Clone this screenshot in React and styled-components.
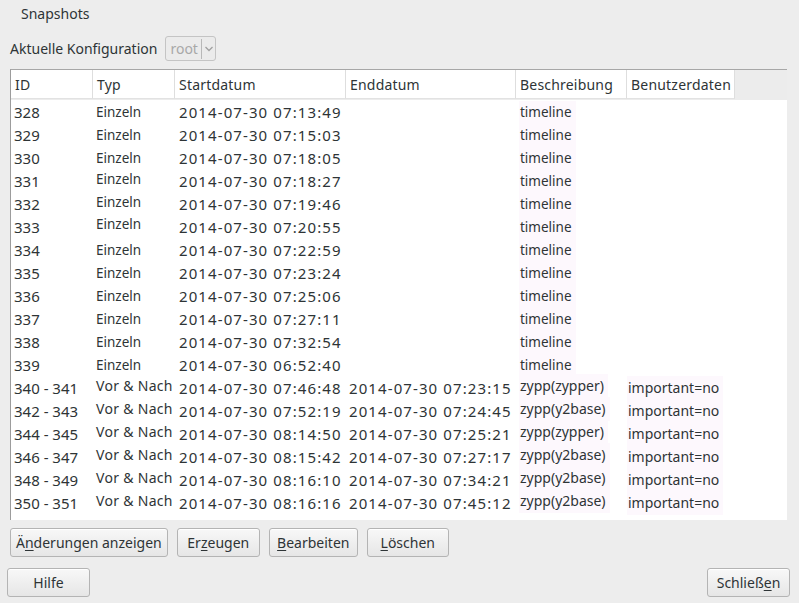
import React from 'react'
import styled, { createGlobalStyle } from 'styled-components'

const Global = createGlobalStyle`
  html, body {
    margin: 0;
    padding: 0;
    background: #ededed;
  }
  body {
    font-family: 'Noto Sans', 'Open Sans', sans-serif;
    color: #2e3436;
  }
`

const Window = styled.div`
  width: 799px;
  height: 603px;
  overflow: hidden;
  background: #ededed;
  display: flex;
  flex-direction: column;
`
const Title = styled.div`
  font-size: 14px;
  padding: 4px 0 0 21px;
  height: 26px;
  box-sizing: border-box;
`
const ConfigRow = styled.div`
  display: flex;
  align-items: center;
  gap: 8px;
  padding: 10px 0 0 10px;
  font-size: 14px;
`
const Combo = styled.div`
  display: flex;
  align-items: center;
  height: 25px;
  box-sizing: border-box;
  border: 1px solid #c4c4c4;
  border-radius: 3px;
  background: #ebebeb;
  color: #a8a8a8;
  font-size: 14px;
  padding: 0 1px 0 4px;
`
const ComboSep = styled.span`
  width: 1px;
  height: 20px;
  background: #b8b8b8;
  margin: 0 2px 0 3px;
`
const Panel = styled.div`
  margin: 8px 12px 0 10px;
  height: 451px;
  box-sizing: border-box;
  border-left: 1px solid #9c9c9c;
  border-top: 1px solid #a7a7a7;
  background: #fff;
  display: flex;
  flex-direction: column;
`
const HeaderRow = styled.div`
  display: flex;
  height: 29px;
  background: #ececec;
  border-bottom: 1px solid #ececec;
`
const HeadCell = styled.div`
  width: ${p => p.w}px;
  flex: none;
  box-sizing: border-box;
  background: #fff;
  border-right: 1px solid #dedede;
  border-bottom: 1px solid #e2e2e2;
  padding: 5px 0 0 4px;
  font-size: 14px;
  letter-spacing: 0.2px;
`
const Row = styled.div`
  display: flex;
  height: 23px;
  align-items: center;
`
const Cell = styled.div`
  width: ${p => p.w}px;
  flex: none;
  box-sizing: border-box;
  padding-left: ${p => p.pl ?? 3}px;
  font-size: ${p => p.fs || 15}px;
  letter-spacing: ${p => p.ls || 0}px;
  white-space: nowrap;
  position: relative;
  top: ${p => p.dy || 0}px;
`
const Tint = styled.span`
  background: #fdf8fd;
  padding: 2px 4px 3px 1px;
`
const ButtonRow = styled.div`
  display: flex;
  gap: 9px;
  padding: 8px 0 0 10px;
`
const BottomRow = styled.div`
  display: flex;
  justify-content: space-between;
  padding: 11px 9px 0 7px;
`
const Button = styled.button`
  font-family: 'Noto Sans', 'Open Sans', sans-serif;
  font-size: 14px;
  color: #2e3436;
  height: 29px;
  min-width: ${p => p.mw || 0}px;
  padding: 0 5px;
  border: 1px solid #b4b4b4;
  border-radius: 3px;
  background: linear-gradient(#f8f8f8, #e6e6e6);
  box-shadow: inset 0 1px #fff;
`
const U = styled.span`
  text-decoration: underline;
  text-underline-offset: 2px;
`

const widths = [82, 82, 171, 170, 111, 108]
const heads = ['ID', 'Typ', 'Startdatum', 'Enddatum', 'Beschreibung', 'Benutzerdaten']

const singles = [
  ['328', '07:13:49'], ['329', '07:15:03'], ['330', '07:18:05'], ['331', '07:18:27'],
  ['332', '07:19:46'], ['333', '07:20:55'], ['334', '07:22:59'], ['335', '07:23:24'],
  ['336', '07:25:06'], ['337', '07:27:11'], ['338', '07:32:54'], ['339', '06:52:40'],
]
const pairs = [
  ['340 - 341', '07:46:48', '07:23:15', 'zypp(zypper)'],
  ['342 - 343', '07:52:19', '07:24:45', 'zypp(y2base)'],
  ['344 - 345', '08:14:50', '07:25:21', 'zypp(zypper)'],
  ['346 - 347', '08:15:42', '07:27:17', 'zypp(y2base)'],
  ['348 - 349', '08:16:10', '07:34:21', 'zypp(y2base)'],
  ['350 - 351', '08:16:16', '07:45:12', 'zypp(y2base)'],
]
const lift = { '331': -2, '332': -2, '333': -3 }

const Chevron = () => (
  <svg width="10" height="8" viewBox="0 0 10 8">
    <path d="M1.5 2 L5 5.5 L8.5 2" fill="none" stroke="#a0a0a0" strokeWidth="1.3" />
  </svg>
)

export default function App() {
  return (
    <Window>
      <Global />
      <Title>Snapshots</Title>
      <ConfigRow>
        <span>Aktuelle Konfiguration</span>
        <Combo>root<ComboSep /><Chevron /></Combo>
      </ConfigRow>
      <Panel>
        <HeaderRow>
          {heads.map((h, i) => <HeadCell key={h} w={widths[i]}>{h}</HeadCell>)}
        </HeaderRow>
        {singles.map(([id, t]) => (
          <Row key={id}>
            <Cell w={widths[0]}>{id}</Cell>
            <Cell w={widths[1]} fs={13.5} pl={3} dy={lift[id] || 0}>Einzeln</Cell>
            <Cell w={widths[2]} pl={4} ls={1.1}>2014-07-30 {t}</Cell>
            <Cell w={widths[3]} />
            <Cell w={widths[4]} fs={13.5} pl={3}><Tint>timeline</Tint></Cell>
            <Cell w={widths[5]} />
          </Row>
        ))}
        {pairs.map(([id, s, e, d]) => (
          <Row key={id}>
            <Cell w={widths[0]}>{id}</Cell>
            <Cell w={widths[1]} fs={14} pl={3} ls={0.3} dy={-2}>Vor &amp; Nach</Cell>
            <Cell w={widths[2]} pl={4} ls={1.1}>2014-07-30 {s}</Cell>
            <Cell w={widths[3]} pl={3} ls={1.1}>2014-07-30 {e}</Cell>
            <Cell w={widths[4]} fs={14} pl={3} dy={-2}><Tint>{d}</Tint></Cell>
            <Cell w={widths[5]} fs={14} pl={0}><Tint>important=no</Tint></Cell>
          </Row>
        ))}
      </Panel>
      <ButtonRow>
        <Button>Ä<U>n</U>derungen anzeigen</Button>
        <Button mw={83}>Er<U>z</U>eugen</Button>
        <Button mw={89}><U>B</U>earbeiten</Button>
        <Button mw={82}><U>L</U>öschen</Button>
      </ButtonRow>
      <BottomRow>
        <Button mw={83}>Hilfe</Button>
        <Button mw={83}>Schließ<U>e</U>n</Button>
      </BottomRow>
    </Window>
  )
}
